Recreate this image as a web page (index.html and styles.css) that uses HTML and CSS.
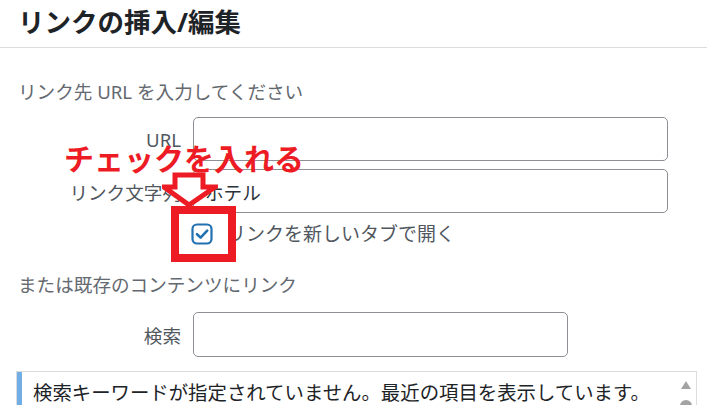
FILE: index.html
```html
<!DOCTYPE html>
<html lang="ja">
<head>
    <meta charset="utf-8">
    <title>リンクの挿入/編集</title>
    <link rel="stylesheet" href="styles.css">
</head>
<body>
    <div class="dialog">
        <div class="dialog-head">
            <h1>リンクの挿入/編集</h1>
        </div>

        <div class="dialog-body">
            <p class="howto first">リンク先 URL を入力してください</p>

            <div class="field">
                <label for="url">URL</label>
                <input type="text" id="url">
            </div>
            <div class="field">
                <label for="link-text">リンク文字列</label>
                <input type="text" id="link-text" value="ホテル">
            </div>
            <div class="field check-row">
                <span></span>
                <label class="check">
                    <svg class="check-box" width="22" height="22" viewBox="0 0 22 22">
                        <rect x="1.5" y="1.5" width="19" height="19" rx="4.5" fill="#fff" stroke="#2271b1" stroke-width="2.2"/>
                        <path d="M6 11.2 L9.6 14.6 L16.2 7.6" fill="none" stroke="#2271b1" stroke-width="2.6" stroke-linecap="round" stroke-linejoin="round"/>
                    </svg>
                    リンクを新しいタブで開く
                </label>
            </div>

            <p class="howto second">または既存のコンテンツにリンク</p>

            <div class="field">
                <label for="search">検索</label>
                <input type="text" id="search" class="short">
            </div>

            <div class="results">
                <div class="query-notice">検索キーワードが指定されていません。最近の項目を表示しています。</div>
                <div class="scrollbar">
                    <span class="arrow-up"></span>
                    <span class="thumb"></span>
                </div>
            </div>
        </div>

        <!-- 注釈 -->
        <div class="note-text">チェックを入れる</div>
        <svg class="note-arrow" width="56" height="36" viewBox="0 0 56 36">
            <polygon points="13,3 41,3 41,15 53,15 27,33 2,15 13,15" fill="#fff" stroke="#ed1c24" stroke-width="5" stroke-linejoin="miter"/>
        </svg>
        <div class="note-box"></div>
    </div>
</body>
</html>
```

FILE: styles.css
```css
/* リンク挿入ダイアログ */
body {
    margin: 0;
    font-family: "Noto Sans", "Noto Sans CJK JP", sans-serif;
    background-color: #fff;
    color: #2c3338;
}

.dialog {
    position: relative;
    width: 707px;
    height: 405px;
    overflow: hidden;
}

.dialog-head {
    height: 47px;
    padding-left: 18px;
    border-bottom: 1px solid #dcdcde;
}

.dialog-head h1 {
    margin: 0;
    padding-top: 6px;
    font-size: 26.5px;
    line-height: 32px;
    font-weight: bold;
    color: #1d2327;
}

.dialog-body {
    padding: 0 10px 0 18px;
}

.howto {
    margin: 0;
    font-size: 18.6px;
    line-height: 26px;
    color: #646970;
}

.howto.first {
    margin-top: 31px;
}

.howto.second {
    margin-top: 26px;
}

.field {
    display: grid;
    grid-template-columns: 163px 475px;
    column-gap: 12px;
    align-items: center;
    margin-top: 8px;
}

.howto.first + .field {
    margin-top: 12px;
}

.howto.second + .field {
    margin-top: 14px;
}

.field label {
    text-align: right;
    font-size: 18.6px;
    color: #50575e;
}

.field input {
    height: 44px;
    box-sizing: border-box;
    border: 1px solid #8c8f94;
    border-radius: 5px;
    padding: 0 11px;
    font-family: inherit;
    font-size: 18.6px;
    color: #2c3338;
    background-color: #fff;
}

.field input.short {
    width: 375px;
    height: 45px;
}

.check-row {
    margin-top: 9px;
}

.field label.check {
    display: flex;
    align-items: center;
    gap: 14px;
    margin-left: -2px;
    text-align: left;
    font-size: 19px;
    line-height: 24px;
    color: #50575e;
}

.check-box {
    display: block;
    flex: none;
}

.results {
    position: relative;
    margin: 14px 0 0 -2px;
    width: 681px;
    height: 60px;
    border: 1px solid #dcdcde;
    border-bottom: none;
    box-sizing: border-box;
}

.query-notice {
    border-left: 5px solid #72aee6;
    padding: 7px 0 0 11px;
    height: 60px;
    box-sizing: border-box;
    font-size: 19.4px;
    line-height: 28px;
    color: #1d2327;
    white-space: nowrap;
}

.scrollbar {
    position: absolute;
    top: 0;
    right: 0;
    width: 20px;
    height: 100%;
    background-color: #fff;
}

.arrow-up {
    position: absolute;
    top: 9px;
    left: 5px;
    width: 0;
    height: 0;
    border-left: 5px solid transparent;
    border-right: 5px solid transparent;
    border-bottom: 8px solid #a3a3a3;
}

.thumb {
    position: absolute;
    top: 28px;
    left: 4px;
    width: 12px;
    height: 30px;
    border-radius: 6px;
    background-color: #a3a3a3;
}

/* 注釈（赤） */
.note-text {
    position: absolute;
    left: 64px;
    top: 141px;
    font-size: 30px;
    line-height: 36px;
    font-weight: bold;
    color: #ed1c24;
    white-space: nowrap;
}

.note-arrow {
    position: absolute;
    left: 162px;
    top: 172px;
}

.note-box {
    position: absolute;
    left: 171px;
    top: 206px;
    width: 65px;
    height: 56px;
    border: 8px solid #ed1c24;
    box-sizing: border-box;
}
```
